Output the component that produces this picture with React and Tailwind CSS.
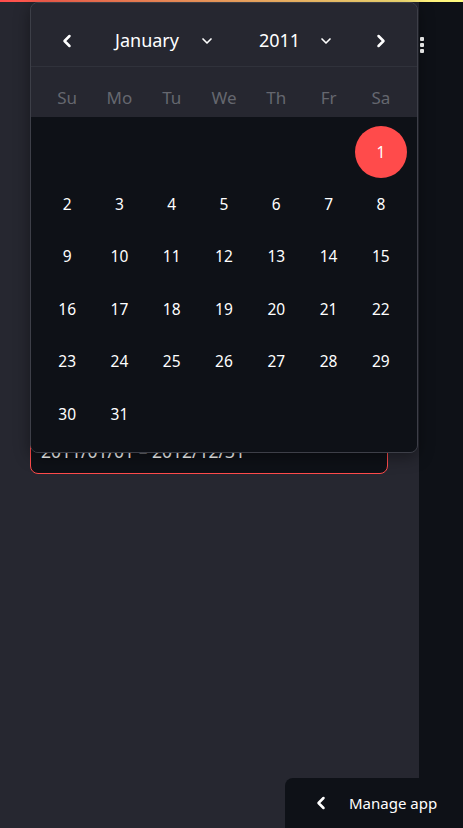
import { ChevronLeft, ChevronRight, ChevronDown } from 'lucide-react'

const weekdays = ['Su', 'Mo', 'Tu', 'We', 'Th', 'Fr', 'Sa']

// January 2011 starts on a Saturday
const days = [...Array(6).fill(null), ...Array.from({ length: 31 }, (_, i) => i + 1)]

function DayCell({ day }) {
  if (!day) return <div className="h-[52.4px]" />
  const selected = day === 1
  return (
    <div className="h-[52.4px] flex items-center justify-center">
      <div
        className={
          'w-[52px] h-[52px] rounded-full flex items-center justify-center text-[15.5px] ' +
          (selected ? 'bg-[#ff4b4b] text-white' : 'text-white')
        }
      >
        {day}
      </div>
    </div>
  )
}

function Calendar() {
  return (
    <div className="absolute left-[30px] top-[2px] w-[388px] rounded-lg border border-[#3d3f48] overflow-hidden shadow-[0_4px_16px_rgba(0,0,0,0.4)]">
      <div className="h-[64px] bg-[#262730] flex items-center pt-[12px] px-[26px] text-white text-[18px] border-b border-[#30323b]">
        <ChevronLeft className="w-5 h-5" strokeWidth={3} />
        <div className="flex items-center ml-[38px]">
          <span>January</span>
          <ChevronDown className="w-4 h-4 ml-[20px]" strokeWidth={2.5} />
        </div>
        <div className="flex items-center ml-[44px]">
          <span>2011</span>
          <ChevronDown className="w-4 h-4 ml-[18px]" strokeWidth={2.5} />
        </div>
        <ChevronRight className="w-5 h-5 ml-auto" strokeWidth={3} />
      </div>
      <div className="h-[50px] bg-[#262730] grid grid-cols-7 px-[10px] pt-[12px] items-center text-[17px] text-[#65676f]">
        {weekdays.map(w => (
          <div key={w} className="text-center">{w}</div>
        ))}
      </div>
      <div className="bg-[#0e1117] grid grid-cols-7 px-[10px] pt-[9px] pb-[12px]">
        {days.map((d, i) => (
          <DayCell key={i} day={d} />
        ))}
      </div>
    </div>
  )
}

export default function App() {
  return (
    <div
      className="relative w-[463px] h-[828px] overflow-hidden bg-[#0e1117] text-white"
      style={{ fontFamily: '"Noto Sans", "Open Sans", sans-serif' }}
    >
      <div className="h-[2px] bg-gradient-to-r from-[#ff4b4b] to-[#fffd80]" />
      <div className="flex h-[826px]">
        <main className="w-[419px] bg-[#262730] px-[30px]">
          <div className="h-[430px]" />
          <div className="w-[358px] h-[42px] rounded-lg border border-[#ff4b4b] bg-[#0e1117] flex items-center px-[10px] pb-[4px] text-[17.5px]">
            2011/01/01 – 2012/12/31
          </div>
        </main>
        <aside className="flex-1 bg-[#0e1117] pt-[35px] pl-[1px]">
          <div className="flex flex-col gap-[2px]">
            <span className="w-[4px] h-[4px] bg-white rounded-[1px]" />
            <span className="w-[4px] h-[4px] bg-white rounded-[1px]" />
            <span className="w-[4px] h-[4px] bg-white rounded-[1px]" />
          </div>
        </aside>
      </div>
      <Calendar />
      <div className="absolute right-0 bottom-0 w-[178px] h-[50px] bg-[#0e1117] rounded-tl-lg flex items-center pl-[26px] gap-[18px] text-[15px]">
        <ChevronLeft className="w-5 h-5" strokeWidth={3} />
        <span>Manage app</span>
      </div>
    </div>
  )
}
